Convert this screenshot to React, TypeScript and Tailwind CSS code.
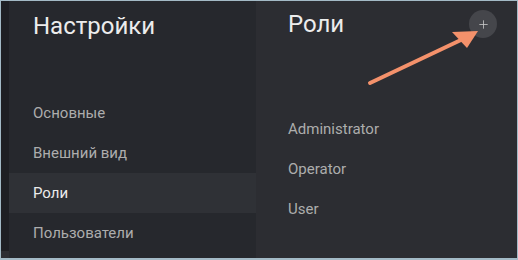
import { Plus } from "lucide-react"

const menu = ["Основные", "Внешний вид", "Роли", "Пользователи"]
const roles = ["Administrator", "Operator", "User"]

export default function App() {
  return (
    <div className="relative w-[518px] h-[260px] border border-b-2 border-[#a3bac6] bg-[#2c2d32] flex overflow-hidden font-['Roboto',sans-serif]">
      {/* left strip */}
      <div className="w-[8px] h-[250px] bg-[#1e1f23] shrink-0" />
      {/* sidebar */}
      <div className="w-[247px] shrink-0 bg-[#26282d] flex flex-col">
        <h1 className="pl-[24px] pt-[10px] text-[24px] leading-[30px] text-[#ececec]">Настройки</h1>
        <ul className="mt-[52px] flex flex-col">
          {menu.map((m) => (
            <li
              key={m}
              className={`h-[40px] flex items-center pl-[24px] text-[15px] ${
                m === "Роли" ? "bg-[#2f3136] text-[#ececec]" : "text-[#adadad]"
              }`}
            >
              {m}
            </li>
          ))}
        </ul>
      </div>
      {/* content */}
      <div className="flex-1 flex flex-col">
        <div className="flex items-center justify-between pl-[32px] pr-[20px] pt-[8px]">
          <h2 className="text-[24px] leading-[30px] text-[#ececec]">Роли</h2>
          <button className="w-[28px] h-[28px] rounded-full bg-[#45464b] flex items-center justify-center text-[#c8c8c8]">
            <Plus size={13} strokeWidth={1.5} />
          </button>
        </div>
        <ul className="mt-[70px] flex flex-col">
          {roles.map((r) => (
            <li key={r} className="h-[40px] flex items-center pl-[32px] text-[15px] text-[#adadad]">
              {r}
            </li>
          ))}
        </ul>
      </div>
      {/* annotation arrow */}
      <svg className="absolute left-0 top-0 pointer-events-none" width="518" height="260">
        <line x1="369" y1="82" x2="462" y2="38" stroke="#f4916b" strokeWidth="4" strokeLinecap="round" />
        <polygon points="477,30 451,31 466,47" fill="#f4916b" />
      </svg>
    </div>
  )
}
